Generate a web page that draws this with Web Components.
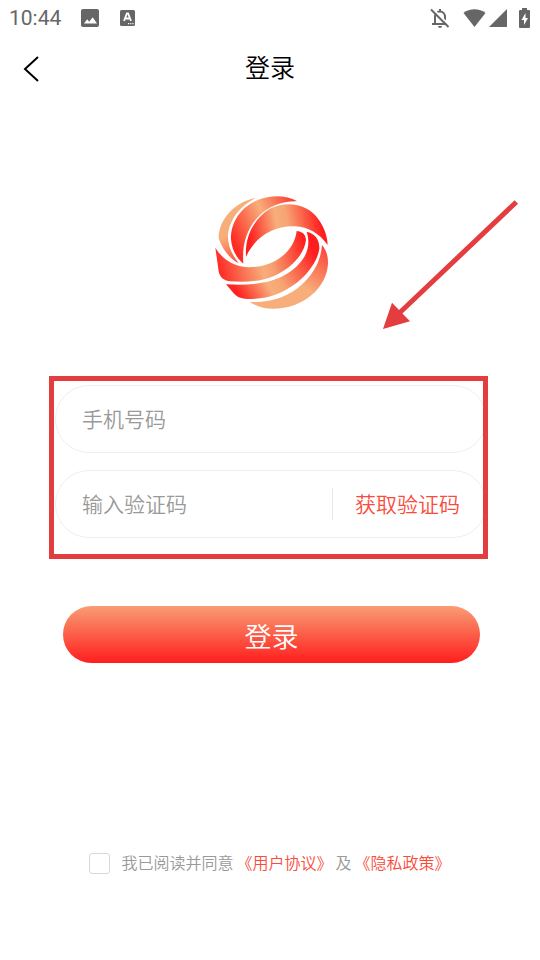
<!DOCTYPE html>
<html lang="zh-CN">
<head>
<meta charset="utf-8">
<meta name="viewport" content="width=device-width, initial-scale=1">
<title>登录</title>
<style>
  body {
    margin: 0;
    background: #fff;
    font-family: Roboto, "Noto Sans CJK SC", sans-serif;
    font-weight: 350;
  }
</style>
</head>
<body>
<login-page>
  <status-bar slot="status" time="10:44"></status-bar>
  <nav-header slot="header">登录</nav-header>
  <brand-logo slot="logo"></brand-logo>
  <pointer-arrow slot="logo"></pointer-arrow>
  <field-frame slot="form">
    <pill-field label="手机号码" type="tel"></pill-field>
    <pill-field label="输入验证码" type="text" action="获取验证码"></pill-field>
  </field-frame>
  <submit-button slot="form">登录</submit-button>
  <agreement-line slot="footer"></agreement-line>
</login-page>

<script>
'use strict';

(function () {
  class LoginPage extends HTMLElement {
    constructor() {
      super();
      const shadow = this.attachShadow({ mode: 'open' });
      shadow.innerHTML = `
        <style>
          :host {
            display: flex;
            flex-direction: column;
            min-height: 100vh;
          }
          .logo {
            position: relative;
            display: flex;
            justify-content: center;
            padding: 85px 0 65px 4px;
          }
        </style>
        <slot name="status"></slot>
        <slot name="header"></slot>
        <main>
          <div class="logo"><slot name="logo"></slot></div>
          <slot name="form"></slot>
          <slot name="footer"></slot>
        </main>
      `;
    }
  }

  class StatusBar extends HTMLElement {
    constructor() {
      super();
      const shadow = this.attachShadow({ mode: 'open' });
      shadow.innerHTML = `
        <style>
          :host {
            display: flex;
            align-items: center;
            height: 36px;
            padding: 0 10px 0 9px;
            color: #666;
            font-size: 21px;
            font-weight: 400;
            line-height: 36px;
          }
          .left, .right {
            display: flex;
            align-items: center;
          }
          .left { gap: 17px; }
          .right { margin-left: auto; }
          svg { display: block; fill: #666; }
          .wifi { margin: 0 3px 0 12px; }
          .battery { margin-left: 12px; }
        </style>
        <div class="left">
          <span>${this.getAttribute('time')}</span>
          <svg width="24" height="24" viewBox="0 0 24 24" aria-hidden="true">
            <path d="M21 19V5c0-1.100-.9-2-2-2H5c-1.100 0-2 .9-2 2v14c0 1.100.9 2 2 2h14c1.100 0 2-.9 2-2zM6 17.500l3.200-4.200 2 2.400 3.500-4.500 4.300 6.300z"/>
          </svg>
          <svg width="18" height="18" viewBox="0 0 18 18" aria-hidden="true">
            <rect x="1" y="1" width="15" height="16" rx="1.500"/>
            <path d="M5 12 7.900 4.500h1.200L12 12M6.200 9.500h4.600" fill="none" stroke="#fff" stroke-width="1.800"/>
            <path d="M9 14h1.200v1.200H9zm2.200 0h1.200v1.200h-1.200zm2.200 0h1.200v1.200h-1.200z" fill="#fff"/>
          </svg>
        </div>
        <div class="right">
          <svg width="22" height="24" viewBox="0 0 22 24" aria-hidden="true">
            <path d="M6 18V11c0-3 2-5.500 5-5.500s5 2.500 5 5.500v7M3 18h16M11 3v3" fill="none" stroke="#666" stroke-width="2"/>
            <path d="M9 20h4a2 2 0 0 1-4 0z"/>
            <path d="M3.500 2.500 21 20" stroke="#fff" stroke-width="2"/>
            <path d="M2 3.500 19.500 21" stroke="#666" stroke-width="2"/>
          </svg>
          <svg class="wifi" width="23" height="18" viewBox="0 0 22 18" aria-hidden="true">
            <path d="M0 4C6-1 16-1 22 4L11 18z"/>
          </svg>
          <svg width="18" height="18" viewBox="0 0 18 18" aria-hidden="true">
            <path d="M18 0v18H0z"/>
          </svg>
          <svg class="battery" width="11" height="20" viewBox="0 0 11 20" aria-hidden="true">
            <path d="M3 0h5v2h2q1 0 1 1v16q0 1-1 1H1q-1 0-1-1V3q0-1 1-1h2z"/>
            <path d="M6.500 5 2.500 12H5v5l4-7H6.500z" fill="#fff"/>
          </svg>
        </div>
      `;
    }
  }

  class NavHeader extends HTMLElement {
    constructor() {
      super();
      const shadow = this.attachShadow({ mode: 'open' });
      shadow.innerHTML = `
        <style>
          :host {
            display: grid;
            grid-template-columns: 62px 1fr 62px;
            align-items: center;
            height: 64px;
          }
          button {
            display: flex;
            justify-content: center;
            padding: 0;
            border: none;
            background: none;
            cursor: pointer;
          }
          h1 {
            margin: 0;
            padding-top: 2px;
            color: #000;
            font-size: 25px;
            font-weight: inherit;
            line-height: 36px;
            text-align: center;
          }
        </style>
        <button type="button" aria-label="返回">
          <svg width="18" height="28" viewBox="0 0 18 28" aria-hidden="true">
            <path d="M16 3 3 15l13 12" fill="none" stroke="#000" stroke-width="2"/>
          </svg>
        </button>
        <h1><slot></slot></h1>
      `;
    }
  }

  class BrandLogo extends HTMLElement {
    constructor() {
      super();
      const shadow = this.attachShadow({ mode: 'open' });
      // six overlapping ribbons, each with its own gradient
      shadow.innerHTML = `
        <style>
          :host { display: block; }
          svg { display: block; }
        </style>
        <svg width="135" height="135" viewBox="0 0 405 405" role="img" aria-label="logo">
          <defs>
            <linearGradient id="a" gradientUnits="userSpaceOnUse" x1="70" y1="150" x2="115" y2="240">
              <stop offset="0" stop-color="#f7ae7a"/><stop offset="1" stop-color="#fc4034"/>
            </linearGradient>
            <linearGradient id="b" gradientUnits="userSpaceOnUse" x1="85" y1="170" x2="275" y2="80">
              <stop offset="0" stop-color="#ff2a24"/><stop offset=".55" stop-color="#f7ae7a"/><stop offset="1" stop-color="#fb4237"/>
            </linearGradient>
            <linearGradient id="c" gradientUnits="userSpaceOnUse" x1="135" y1="165" x2="350" y2="125">
              <stop offset="0" stop-color="#ff1e1e"/><stop offset=".4" stop-color="#f7ae7a"/><stop offset=".55" stop-color="#f7a474"/><stop offset="1" stop-color="#ff1e1e"/>
            </linearGradient>
            <linearGradient id="d" gradientUnits="userSpaceOnUse" x1="38" y1="245" x2="300" y2="180">
              <stop offset="0" stop-color="#fe2925"/><stop offset=".48" stop-color="#f7ae7a"/><stop offset=".6" stop-color="#f79e70"/><stop offset="1" stop-color="#ff1e1e"/>
            </linearGradient>
            <linearGradient id="e" gradientUnits="userSpaceOnUse" x1="100" y1="325" x2="325" y2="200">
              <stop offset="0" stop-color="#ff2421"/><stop offset=".35" stop-color="#f7ae7a"/><stop offset=".5" stop-color="#f7a474"/><stop offset="1" stop-color="#ff1e1e"/>
            </linearGradient>
            <linearGradient id="f" gradientUnits="userSpaceOnUse" x1="290" y1="300" x2="365" y2="200">
              <stop offset="0" stop-color="#f7ae7a"/><stop offset="1" stop-color="#fb4a3c"/>
            </linearGradient>
          </defs>
          <path fill="url(#a)" d="M153 39C91 49 41 102 41 160C51 191 72 219 101 235C80 207 69 184 69 154C71 106 105 62 153 39Z"/>
          <path fill="url(#b)" d="M277 49C242 29 197 31 160 44C109 64 77 110 78 163C80 193 94 218 115 236C111 185 122 137 157 98C190 63 231 48 277 49Z"/>
          <path fill="url(#c)" d="M123 216C119 158 145 103 193 72C236 49 295 53 330 90C354 117 367 149 368 180C344 146 310 126 270 124C205 121 148 157 123 216Z"/>
          <path fill="url(#d)" d="M31 188C51 221 84 244 129 247C211 247 268 198 275 138C290 139 302 147 303 164C299 207 257 253 202 275C161 291 116 291 76 289C55 288 44 275 41 259Z"/>
          <path fill="url(#e)" d="M63 298C132 301 197 298 248 265C298 233 321 189 305 141C329 144 344 164 343 191C337 234 297 286 243 314C203 337 165 342 127 342C104 341 96 335 86 325Z"/>
          <path fill="url(#f)" d="M134 351C195 353 250 337 293 296C328 264 348 224 351 180C363 194 370 213 369 237C364 311 293 371 205 371C177 371 153 363 134 351Z"/>
        </svg>
      `;
    }
  }

  class PointerArrow extends HTMLElement {
    constructor() {
      super();
      const shadow = this.attachShadow({ mode: 'open' });
      shadow.innerHTML = `
        <style>
          :host {
            position: absolute;
            top: 90px;
            right: 10px;
          }
          svg { display: block; }
        </style>
        <svg width="160" height="150" viewBox="0 0 480 450" aria-hidden="true">
          <path d="M439 36 85 372" stroke="#e43d40" stroke-width="15"/>
          <path d="M39 417 66 338 120 394Z" fill="#e43d40"/>
        </svg>
      `;
    }
  }

  class FieldFrame extends HTMLElement {
    constructor() {
      super();
      const shadow = this.attachShadow({ mode: 'open' });
      shadow.innerHTML = `
        <style>
          :host {
            position: relative;
            display: flex;
            flex-direction: column;
            gap: 17px;
            margin: 0 53px 0 55px;
          }
          /* red marker drawn over the edges of the fields */
          .marker {
            position: absolute;
            inset: -9px -1px -21px -6px;
            border: 5px solid #e43d40;
            pointer-events: none;
          }
        </style>
        <slot></slot>
        <div class="marker"></div>
      `;
    }
  }

  class PillField extends HTMLElement {
    constructor() {
      super();
      const shadow = this.attachShadow({ mode: 'open' });
      const label = this.getAttribute('label');
      const action = this.getAttribute('action');
      shadow.innerHTML = `
        <style>
          :host {
            box-sizing: border-box;
            display: flex;
            align-items: center;
            height: 68px;
            padding: 0 26px;
            border: 1px solid #eee;
            border-radius: 34px;
            font-size: 21px;
          }
          input {
            flex: 1;
            min-width: 0;
            height: 48px;
            padding: 2px 0 0;
            border: none;
            outline: none;
            background: none;
            color: #333;
            font: inherit;
          }
          input::placeholder { color: #999; opacity: 1; }
          button {
            height: 32px;
            padding: 2px 0 0 22px;
            border: none;
            border-left: 1px solid #e8e8e8;
            background: none;
            color: #fa4b3c;
            font: inherit;
            line-height: 30px;
            cursor: pointer;
          }
        </style>
        <input type="${this.getAttribute('type')}" placeholder="${label}" aria-label="${label}">
        ${action ? `<button type="button">${action}</button>` : ''}
      `;
    }
  }

  class SubmitButton extends HTMLElement {
    constructor() {
      super();
      const shadow = this.attachShadow({ mode: 'open' });
      shadow.innerHTML = `
        <style>
          :host {
            display: block;
            margin: 68px 60px 0 63px;
          }
          button {
            display: block;
            width: 100%;
            height: 57px;
            padding: 2px 0 0;
            border: none;
            border-radius: 29px;
            background: linear-gradient(#f99d74, #ff1e1e);
            color: #fff;
            font: inherit;
            font-size: 27px;
            cursor: pointer;
          }
        </style>
        <button type="submit"><slot></slot></button>
      `;
    }
  }

  class AgreementLine extends HTMLElement {
    constructor() {
      super();
      const shadow = this.attachShadow({ mode: 'open' });
      shadow.innerHTML = `
        <style>
          :host {
            display: flex;
            justify-content: center;
            align-items: center;
            gap: 3px;
            margin-top: 187px;
            color: #999;
            font-size: 16px;
            line-height: 24px;
          }
          input {
            appearance: none;
            box-sizing: border-box;
            width: 21px;
            height: 21px;
            margin: 0 8px 0 0;
            border: 1px solid #d8d8d8;
            border-radius: 3px;
            background: #fff;
          }
          input:checked { background: #fa4b3c; }
          label, span, a { padding-top: 2px; }
          a { color: #fa4b3c; text-decoration: none; }
        </style>
        <input type="checkbox" id="agree">
        <label for="agree">我已阅读并同意</label>
        <a href="#terms">《用户协议》</a>
        <span>及</span>
        <a href="#privacy">《隐私政策》</a>
      `;
    }
  }

  customElements.define('login-page', LoginPage);
  customElements.define('status-bar', StatusBar);
  customElements.define('nav-header', NavHeader);
  customElements.define('brand-logo', BrandLogo);
  customElements.define('pointer-arrow', PointerArrow);
  customElements.define('field-frame', FieldFrame);
  customElements.define('pill-field', PillField);
  customElements.define('submit-button', SubmitButton);
  customElements.define('agreement-line', AgreementLine);
})();
</script>
</body>
</html>
